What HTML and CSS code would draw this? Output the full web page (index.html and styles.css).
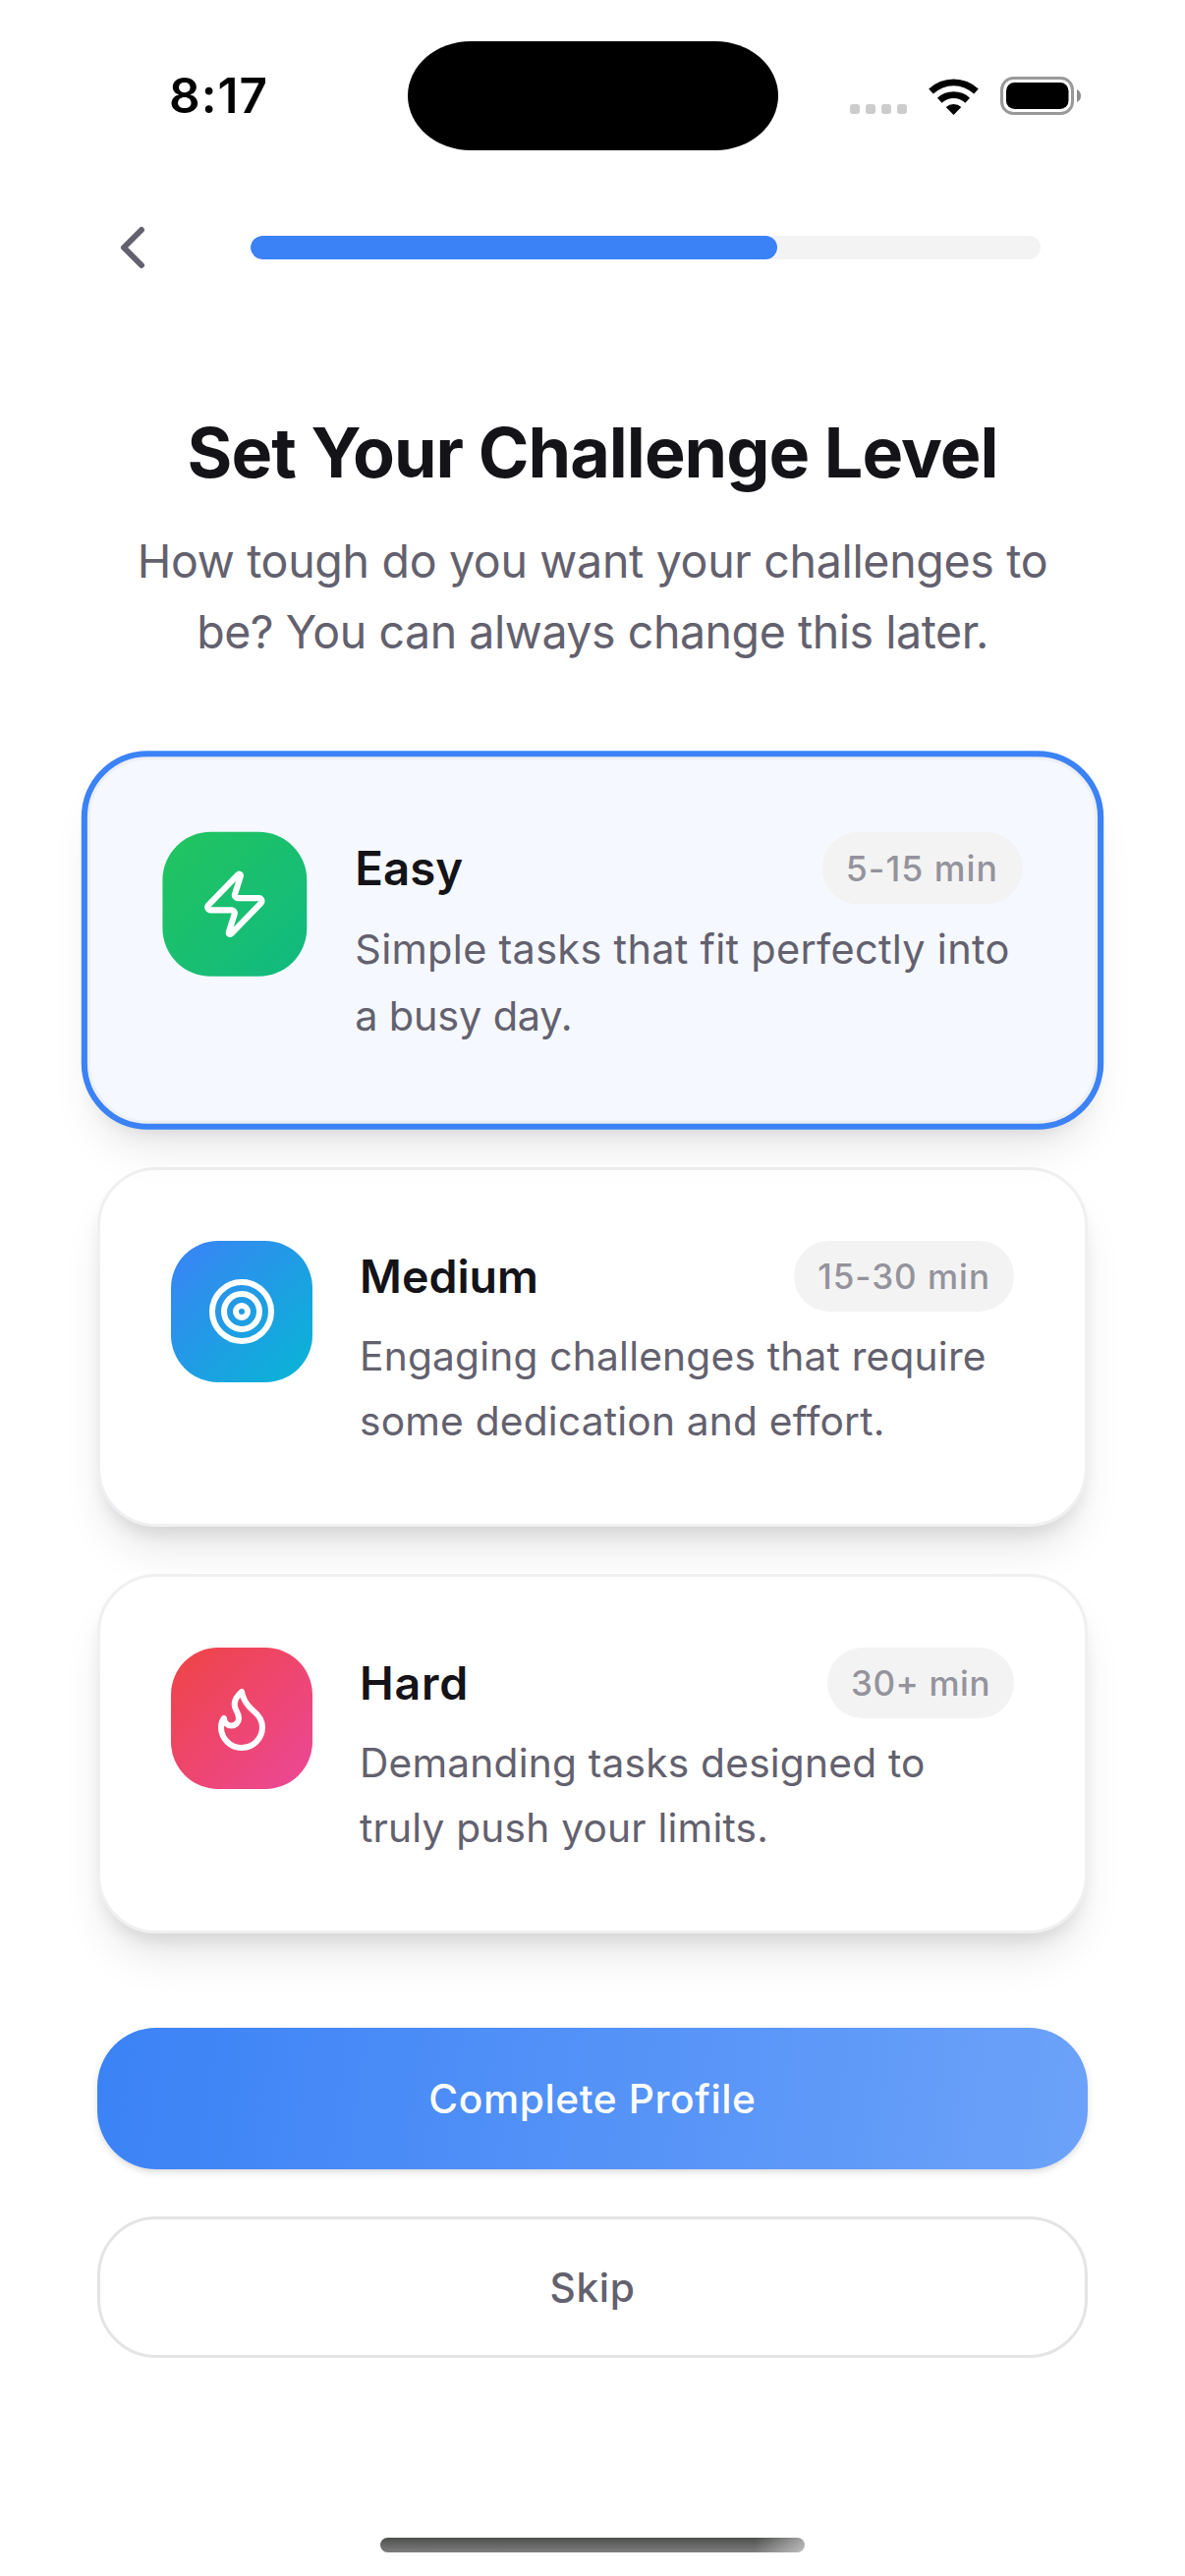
FILE: index.html
```html
<!DOCTYPE html>
<html lang="en">
<head>
<meta charset="utf-8">
<title>Set Your Challenge Level</title>
<link rel="stylesheet" href="styles.css">
</head>
<body>
<div class="screen">
  <header class="status">
    <div class="clock">8:17</div>
    <div class="island"></div>
    <div class="indicators">
      <div class="signal"><i></i><i></i><i></i><i></i></div>
      <svg class="wifi" viewBox="0 0 51 38" width="51" height="38" fill="#000">
        <path d="M0.2 11.6A36.5 36.5 0 0 1 50.8 11.6L46.2 16.6A29.8 29.8 0 0 0 4.8 16.6Z"/>
        <path d="M9 20.7A24 24 0 0 1 42 20.7L37.4 25.8A17 17 0 0 0 13.6 25.8Z"/>
        <path d="M17.7 30A11.5 11.5 0 0 1 33.3 30L25.5 38Z"/>
      </svg>
      <svg class="battery" viewBox="0 0 82 39" width="82" height="39">
        <rect x="1.5" y="1.5" width="72" height="36" rx="12" fill="none" stroke="#999" stroke-width="3"/>
        <rect x="6" y="6" width="63.5" height="27" rx="8.5" fill="#000"/>
        <path d="M78 13Q82 15 82 19.5Q82 24 78 26Z" fill="#8c8c8c"/>
      </svg>
    </div>
  </header>

  <nav class="topbar">
    <svg class="icon back" viewBox="0 0 24 24"><path d="m15 18-6-6 6-6"/></svg>
    <div class="track"><div class="fill"></div></div>
  </nav>

  <main>
    <h1 class="title">Set Your Challenge Level</h1>
    <p class="subtitle">How tough do you want your challenges to<br><span class="tight">be? You can always change this later.</span></p>

    <section class="cards">
      <article class="card selected">
        <div class="tile easy"><svg class="icon" viewBox="0 0 24 24"><path d="M4 14a1 1 0 0 1-.78-1.63l9.9-10.2a.5.5 0 0 1 .86.46l-1.92 6.02A1 1 0 0 0 13 10h7a1 1 0 0 1 .78 1.63l-9.9 10.2a.5.5 0 0 1-.86-.46l1.92-6.02A1 1 0 0 0 11 14z"/></svg></div>
        <div class="body">
          <div class="row"><h2>Easy</h2><span class="pill">5-15 min</span></div>
          <p>Simple tasks that fit perfectly into<br><span class="tight">a busy day.</span></p>
        </div>
      </article>
      <article class="card">
        <div class="tile medium"><svg class="icon" viewBox="0 0 24 24"><circle cx="12" cy="12" r="10"/><circle cx="12" cy="12" r="6"/><circle cx="12" cy="12" r="2"/></svg></div>
        <div class="body">
          <div class="row"><h2>Medium</h2><span class="pill">15-30 min</span></div>
          <p>Engaging challenges that require<br>some dedication and effort.</p>
        </div>
      </article>
      <article class="card">
        <div class="tile hard"><svg class="icon" viewBox="0 0 24 24"><path d="M8.5 14.5A2.5 2.5 0 0 0 11 12c0-1.38-.5-2-1-3-1.072-2.143-.224-4.054 2-6 .5 2.5 2 4.9 4 6.5 2 1.6 3 3.5 3 5.5a7 7 0 1 1-14 0c0-1.153.433-2.294 1-3a2.5 2.5 0 0 0 2.5 2.5z"/></svg></div>
        <div class="body">
          <div class="row"><h2 class="loose">Hard</h2><span class="pill snug">30+ min</span></div>
          <p>Demanding tasks designed to<br>truly push your limits.</p>
        </div>
      </article>
    </section>

    <div class="actions">
      <button class="btn primary">Complete Profile</button>
      <button class="btn secondary">Skip</button>
    </div>
  </main>
  <div class="home"></div>
</div>
</body>
</html>
```
FILE: styles.css
```css
* { box-sizing: border-box; margin: 0; padding: 0; }
body { width: 1206px; height: 2622px; overflow: hidden; background: #fff; font-family: Inter, "Liberation Sans", sans-serif; }
.screen { width: 1206px; height: 2622px; display: flex; flex-direction: column; }

.status { height: 216px; flex: none; padding: 41px 106px 0 172px; display: flex; align-items: flex-start; }
.clock { width: 243px; flex: none; padding-top: 20px; line-height: 72px; font-size: 49.5px; font-weight: 600; letter-spacing: 1px; color: #000; }
.island { width: 377px; height: 111px; flex: none; margin-top: .5px; border-radius: 64px / 55.5px; background: #000; }
.indicators { margin-left: auto; padding-top: 37px; display: flex; align-items: flex-end; }
.signal { display: flex; gap: 5.6px; margin: 0 22px 1px 0; }
.signal i { width: 10.4px; height: 10.4px; border-radius: 3px; background: #ccc; }
.battery { margin-left: 22px; }

.topbar { height: 72px; flex: none; padding: 0 147px 0 99px; display: flex; align-items: center; gap: 84px; }
.icon { width: 72px; height: 72px; flex: none; fill: none; stroke: #fff; stroke-width: 2; stroke-linecap: round; stroke-linejoin: round; }
.back { stroke: #63616e; }
.track { flex: 1; height: 24px; border-radius: 12px; background: #f3f3f3; overflow: hidden; }
.fill { width: 66.667%; height: 100%; border-radius: 12px; background: #3b82f6; }

main { padding: 128px 99px 0; display: flex; flex-direction: column; }
.title { font-size: 70px; line-height: 90px; font-weight: 700; letter-spacing: -.96px; text-align: center; color: #141318; white-space: nowrap; }
.subtitle { margin-top: 29px; font-size: 46.5px; line-height: 72px; letter-spacing: -.32px; text-align: center; color: #63616e; white-space: nowrap; }
.subtitle .tight { letter-spacing: -.45px; }

.cards { margin-top: 95px; display: flex; flex-direction: column; gap: 48px; }
.card { height: 366px; padding: 72px; display: flex; gap: 48px; border: 3px solid #f0f0f2; border-radius: 60px; background: #fff; box-shadow: 0 30px 45px -9px rgba(0,0,0,.1), 0 12px 18px -6px rgba(0,0,0,.1); }
.selected { transform: scale(1.02); background: #f5f8ff; border-color: #edeff3; box-shadow: 0 0 0 6px #3b82f6, 0 30px 45px -9px rgba(0,0,0,.1), 0 12px 18px -6px rgba(0,0,0,.1); }
.tile { width: 144px; height: 144px; flex: none; border-radius: 48px; display: flex; align-items: center; justify-content: center; }
.easy { background: linear-gradient(135deg, #22c55e, #10b981); }
.medium { background: linear-gradient(135deg, #3b82f6, #06b6d4); }
.hard { background: linear-gradient(135deg, #ef4444, #ec4899); }
.body { flex: 1; white-space: nowrap; }
.row { height: 72px; display: flex; justify-content: space-between; }
.row h2 { font-size: 46.5px; line-height: 73px; font-weight: 600; color: #141318; }
.row .loose { letter-spacing: .8px; }
.pill { height: 72px; padding: 0 24px; line-height: 72px; border-radius: 36px; background: #f3f3f3; color: #94939c; font-size: 35px; font-weight: 500; letter-spacing: 1px; }
.snug { letter-spacing: .55px; }
.body p { margin-top: 13px; font-size: 40.7px; line-height: 66px; letter-spacing: .2px; color: #63616e; }
.selected p { letter-spacing: .27px; }
.selected .tight { letter-spacing: -.2px; }

.actions { margin-top: 96px; display: flex; flex-direction: column; gap: 48px; }
.btn { height: 144px; border: 0; border-radius: 60px; font-family: inherit; font-size: 40.7px; font-weight: 500; letter-spacing: .6px; }
.primary { color: #fff; background: linear-gradient(98.13deg, #3b82f6, #6ca2f9); box-shadow: 0 3px 9px rgba(0,0,0,.1), 0 3px 6px -3px rgba(0,0,0,.1); }
.secondary { color: #63616e; background: #fff; border: 3px solid #e4e4e6; }

.home { width: 432px; height: 15px; flex: none; margin: 183px auto 0; border-radius: 8px; background: linear-gradient(100deg, transparent 88%, rgba(255,255,255,.5)), linear-gradient(#4d504d, #7d7d7d); }
```
